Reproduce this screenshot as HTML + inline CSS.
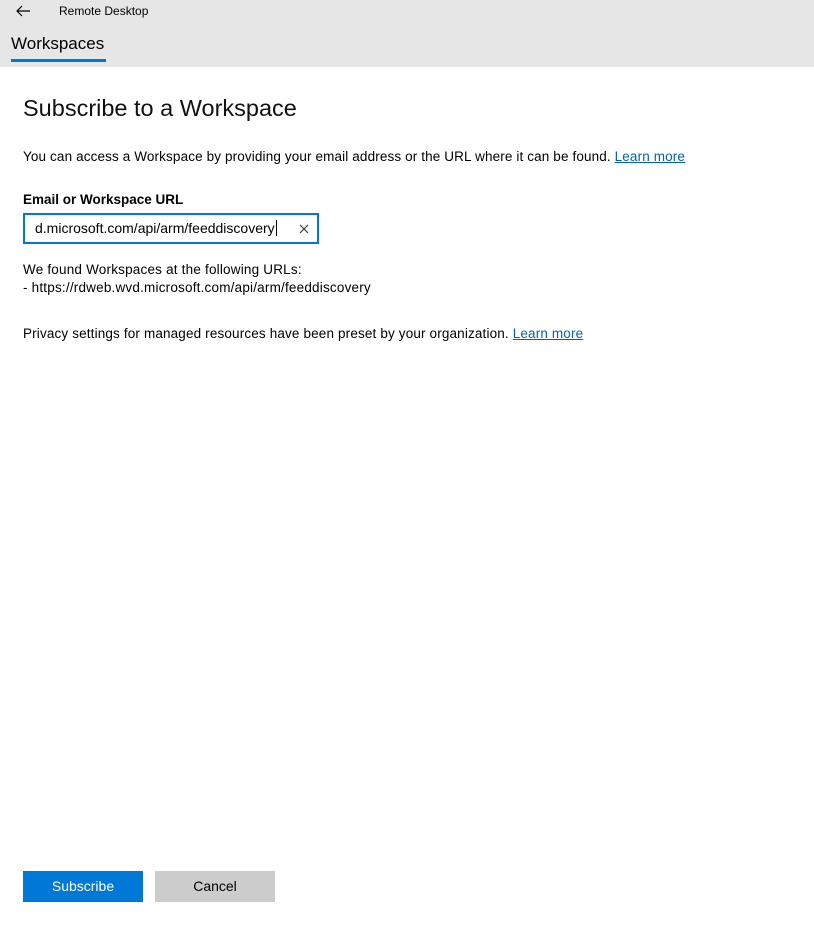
<!DOCTYPE html>
<html><head><style>
body{margin:0;width:814px;height:926px;background:#fff;font-family:"Liberation Sans",sans-serif;color:#000;position:relative;overflow:hidden}
.hdr{position:absolute;left:0;top:0;width:814px;height:67px;background:#e6e6e6}
.abs{position:absolute;white-space:nowrap}
a{color:#0063b1;text-decoration:underline}
</style></head><body>
<div class="hdr"></div>
<svg class="abs" style="left:15px;top:4px" width="16" height="14" viewBox="0 0 16 14"><path d="M15 7H2M7 2L2 7l5 5" fill="none" stroke="#000" stroke-width="1.2"/></svg>
<div class="abs" style="left:59px;top:4px;font-size:12px">Remote Desktop</div>
<div class="abs" style="left:11px;top:34px;font-size:17px">Workspaces</div>
<div class="abs" style="left:11px;top:59px;width:95px;height:3px;background:#0078d7"></div>
<div class="abs" style="left:23px;top:95px;font-size:23.5px;color:#111">Subscribe to a Workspace</div>
<div class="abs" style="left:23px;top:149px;font-size:13.5px;letter-spacing:0.13px">You can access a Workspace by providing your email address or the URL where it can be found. <a>Learn more</a></div>
<div class="abs" style="left:23px;top:192px;font-size:13.5px;font-weight:bold">Email or Workspace URL</div>
<div class="abs" style="left:23px;top:213px;width:292px;height:27px;border:2px solid #0078d7"></div>
<div class="abs" style="left:35px;top:220px;font-size:14px">d.microsoft.com/api/arm/feeddiscovery<span style="border-left:1px solid #000;margin-left:1px"></span></div>
<svg class="abs" style="left:299px;top:224px" width="10" height="10" viewBox="0 0 10 10"><path d="M1 1L9 9M9 1L1 9" stroke="#333" stroke-width="1.1"/></svg>
<div class="abs" style="left:23px;top:261px;font-size:13.5px;line-height:18px;letter-spacing:0.2px">We found Workspaces at the following URLs:<br>- https://rdweb.wvd.microsoft.com/api/arm/feeddiscovery</div>
<div class="abs" style="left:23px;top:326px;font-size:13.5px;letter-spacing:0.15px">Privacy settings for managed resources have been preset by your organization. <a>Learn more</a></div>
<div class="abs" style="left:23px;top:871px;width:120px;height:31px;background:#0078d7;color:#fff;font-size:14px;text-align:center;line-height:31px">Subscribe</div>
<div class="abs" style="left:155px;top:871px;width:120px;height:31px;background:#cccccc;color:#000;font-size:14px;text-align:center;line-height:31px">Cancel</div>
</body></html>
